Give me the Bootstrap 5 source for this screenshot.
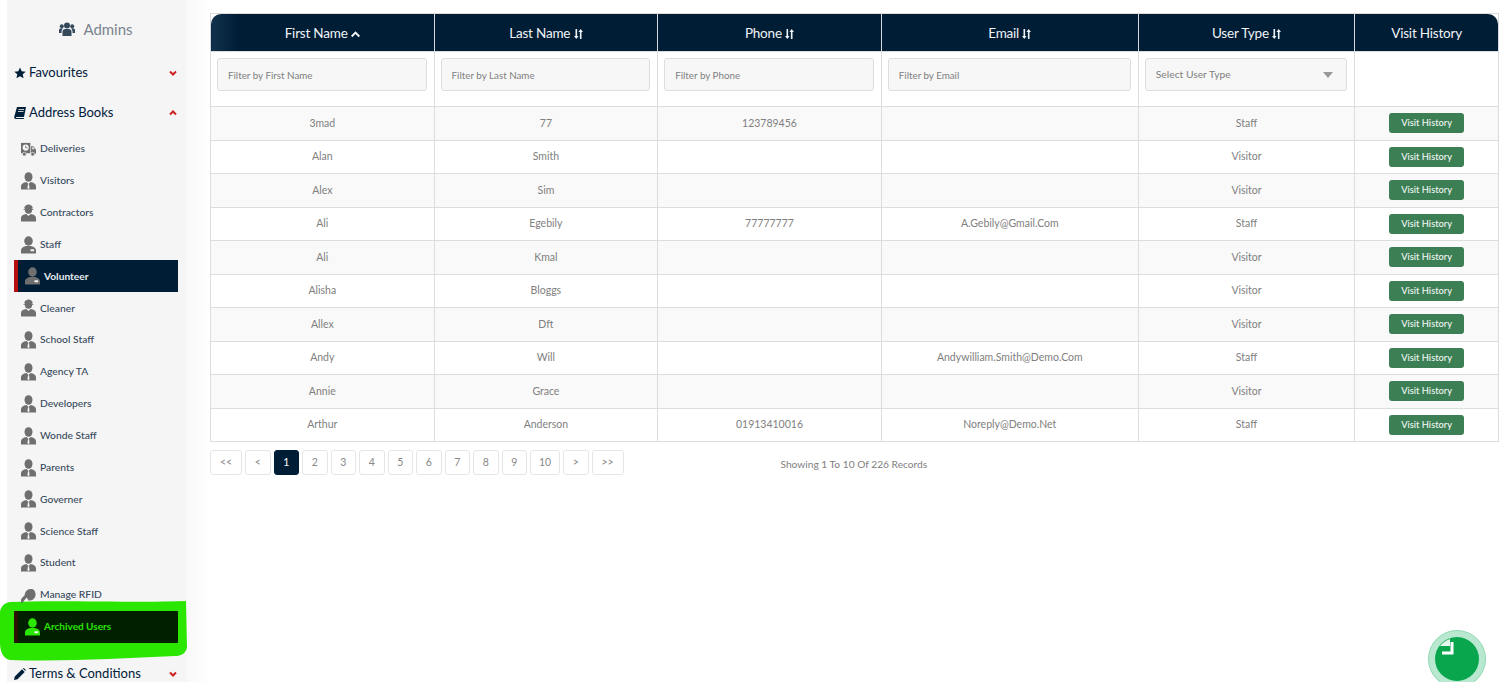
<!DOCTYPE html>
<html lang="en"><head><meta charset="utf-8"><title>Archived Users</title>
<link href="https://cdn.jsdelivr.net/npm/bootstrap@5.3.0/dist/css/bootstrap.min.css" rel="stylesheet">
<style>
html,body{height:682px;overflow:hidden;background:#fff}
body{font-family:"Lato","Liberation Sans",sans-serif;color:#808080}
.shell{height:682px;position:relative}
.side{width:179px;flex:none;margin-left:7px;background:#f5f5f5;height:682px;padding:18px 8px 0 7px;position:relative}
.adm{height:22px;font-size:15px;color:#7b8390;gap:8px;position:relative;z-index:1}
.grp{height:40px;font-size:13px;color:#00203a;padding-right:1px;gap:3px;position:relative;z-index:1}
.grp.first{margin-top:13px}
.grp.last{margin-top:11px}
.gi{width:12px;height:12px;fill:#00203a;flex:none}
.chev{width:8px;height:6px;stroke:#c22;stroke-width:2;fill:none;flex:none}
.sub{margin:0;padding:0;list-style:none;position:relative;z-index:1}
.sub li{height:31.87px;font-size:10.3px;color:#35495c;padding-left:7px;gap:4px;font-weight:500}
.ui{width:15px;height:18px;fill:#6f6f6f;flex:none}
.sub li.on{background:#001d36;color:#e8edf1;border-left:4px solid #b50f0f;font-weight:700;font-size:10.2px}
.sub li.arch{background:#002000;color:#2be600;border-left:4px solid #2a1400;font-weight:700;font-size:10px}
.arch .ui{fill:#2be600}
.blob{position:absolute;left:-7px;top:601px;width:187px;height:60px;fill:#2be600;z-index:0}
.main{flex:1;padding:13px 14px 0 24px;min-width:0;background:linear-gradient(90deg,#f8f8f8,#fff 24px)}
.tbl{table-layout:fixed;width:1288px;margin:0;font-size:10.5px;border-color:#ddd;--bs-table-striped-bg:#f9f9f9;--bs-table-striped-color:#808080;--bs-table-color:#808080;--bs-table-bg:#fff}
.tbl th,.tbl td{text-align:center;vertical-align:middle;padding:1px 4px 0;border-color:#ddd}
.tbl td:last-child{padding-top:0}
.tbl thead tr.hd th{height:38px;background:#001d36;color:#f0f3f5;font-size:13.5px;letter-spacing:-.2px;font-weight:400;border-color:#d5d9dd;border-top:0}
.tbl thead tr.hd th:first-child{border-top-left-radius:10px;background:linear-gradient(90deg,#12324d,#001d36 12%)}
.tbl thead tr.hd th:last-child{border-top-right-radius:10px}
.tbl tr.flt td{height:55px;padding:6px 7px 15px 6px;background:#fff}
.tbl tbody tr{height:33.5px}
.c1{width:223.6px}.c2{width:257px}.c3{width:216.500px}.c4{width:143.700px}
.fin{height:33px;min-height:33px;background-color:#f7f7f7;border-color:#ddd;border-radius:3px;font-size:9.8px;padding:0 10px;color:#808080}
.fin::placeholder{color:#808080;opacity:1}
.fin.form-select{background-image:none;color:#808080;font-size:10.3px}
.selw{position:relative}
.tri{position:absolute;right:14px;top:14px;width:0;height:0;border:5.5px solid transparent;border-top:6px solid #999;border-bottom:0}
.vbtn{background:#3c7f55;color:#f2f6f3;font-size:9.3px;width:75px;height:20px;padding:0;border:0;border-radius:3px;line-height:20px;font-weight:500}
.so{width:9px;height:10px;fill:#f0f3f5;vertical-align:-1px}
.pgr{margin:8px 0 0;gap:3px}
.pgr .page-link{height:25px;min-width:25.5px;padding:0 7px;line-height:23px;text-align:center;font-size:10.5px;color:#888;background:#fff;border:1px solid #e6e6e6;border-radius:3px!important;margin:0!important}
.pgr .wa .page-link{min-width:32px}
.pgr .wb .page-link{min-width:30px}
.pgr .active .page-link{background:#001d36;border-color:#001d36;color:#fff}
.rec{font-size:10.2px;color:#808080;margin:15px 0 0 157px}
.clock{position:absolute;left:1428px;top:630px;width:58px;height:58px}
</style></head>
<body>
<svg width="0" height="0" class="d-none" aria-hidden="true">
<symbol id="tie" viewBox="0 0 15 18"><ellipse cx="7.500" cy="5" rx="4" ry="4.800"/><path d="M0 17.500v-3c0-2.700 2.500-4 5.300-4.500l2.200 2 2.200-2c2.800.5 5.300 1.800 5.300 4.500v3z"/><path d="M7 12.200h1l.6 3.800-1.100 1.300-1.100-1.300z" fill="#f5f5f5"/></symbol>
<symbol id="hat" viewBox="0 0 15 18"><ellipse cx="7.500" cy="6" rx="3.600" ry="3.800"/><path d="M3.200 4.500C3.500 1.500 5.500.5 7.500.5s4 1 4.300 4zM2.500 5h10v.8h-10z"/><path d="M0 17.500v-3.500c0-2.500 2.500-3.600 5.300-4l2.200 2 2.200-2c2.800.4 5.300 1.500 5.300 4v3.500z"/></symbol>
<symbol id="bdg" viewBox="0 0 15 18"><ellipse cx="7.500" cy="5" rx="4.300" ry="4.700"/><path d="M0 17.500v-3c0-2.700 2.500-4 5.300-4.500h4.400c2.800.5 5.300 1.800 5.300 4.500v3z"/><rect x="9.300" y="13.300" width="4" height="2" rx="1" fill="#f5f5f5"/></symbol>
</svg>
<div class="shell d-flex">
<aside class="side">
<div class="adm d-flex align-items-center justify-content-center"><svg width="16" height="14" viewBox="0 0 16 14" fill="#35495c"><circle cx="8" cy="3.500" r="3"/><circle cx="2.800" cy="4.200" r="2"/><circle cx="13.200" cy="4.200" r="2"/><path d="M3.500 14V9.500C3.500 8 5 7 6 7h4c1 0 2.500 1 2.500 2.500V14z"/><path d="M0 11V8c0-1 1-1.800 2-1.800h1.800L2.500 9v2zM16 11V8c0-1-1-1.800-2-1.800h-1.800L13.500 9v2z"/></svg><span>Admins</span></div>
<div class="grp first d-flex align-items-center"><svg class="gi" viewBox="0 0 24 24"><path d="M12 1l3.400 7.400 8 .9-6 5.400 1.700 8L12 18.700 4.900 22.700l1.700-8-6-5.400 8-.9z"/></svg><span class="flex-grow-1">Favourites</span><svg class="chev" viewBox="0 0 8 6"><path d="M1 1.500l3 3 3-3"/></svg></div>
<div class="grp d-flex align-items-center"><svg class="gi" viewBox="0 0 12 12"><path d="M3 0h9l-2 10H2.500c-.8 0-.8 1 0 1H10l-.2 1H2C.5 12 0 10.800.3 9.500z"/><path d="M4.500 2.500h5.500M4 4.500h5.500" stroke="#f5f5f5" stroke-width=".8"/></svg><span class="flex-grow-1">Address Books</span><svg class="chev" viewBox="0 0 8 6"><path d="M1 4.500l3-3 3 3"/></svg></div>
<ul class="sub">
<li class="d-flex align-items-center"><svg class="ui" viewBox="0 0 16 18"><path d="M0 2.500h10v11H0z"/><path d="M10.700 6h2.300l3 3.500V14h-5.300z"/><circle cx="3.500" cy="14.500" r="2" stroke="#f5f5f5" stroke-width=".7"/><circle cx="12.500" cy="14.500" r="2" stroke="#f5f5f5" stroke-width=".7"/><circle cx="5" cy="7.500" r="3.300" fill="#f5f5f5"/><path d="M5 5.500v2.200h1.800" fill="none" stroke="#6f6f6f" stroke-width=".9"/><path d="M12 7.200h1l1.600 2h-2.600z" fill="#f5f5f5"/></svg>Deliveries</li>
<li class="d-flex align-items-center"><svg class="ui"><use href="#tie"/></svg>Visitors</li>
<li class="d-flex align-items-center"><svg class="ui"><use href="#hat"/></svg>Contractors</li>
<li class="d-flex align-items-center"><svg class="ui"><use href="#bdg"/></svg>Staff</li>
<li class="on d-flex align-items-center"><svg class="ui"><use href="#bdg"/></svg>Volunteer</li>
<li class="d-flex align-items-center"><svg class="ui"><use href="#hat"/></svg>Cleaner</li>
<li class="d-flex align-items-center"><svg class="ui"><use href="#tie"/></svg>School Staff</li>
<li class="d-flex align-items-center"><svg class="ui"><use href="#tie"/></svg>Agency TA</li>
<li class="d-flex align-items-center"><svg class="ui"><use href="#tie"/></svg>Developers</li>
<li class="d-flex align-items-center"><svg class="ui"><use href="#tie"/></svg>Wonde Staff</li>
<li class="d-flex align-items-center"><svg class="ui"><use href="#tie"/></svg>Parents</li>
<li class="d-flex align-items-center"><svg class="ui"><use href="#tie"/></svg>Governer</li>
<li class="d-flex align-items-center"><svg class="ui"><use href="#tie"/></svg>Science Staff</li>
<li class="d-flex align-items-center"><svg class="ui"><use href="#tie"/></svg>Student</li>
<li class="d-flex align-items-center"><svg class="ui" viewBox="0 0 16 18" fill="none" stroke="#6f6f6f"><path d="M1 15.500c1-2 2.500-3.500 4-5" stroke-width="3.400" stroke-linecap="round"/><path d="M4.500 9a6 6 0 0 1 8-5.500 6 6 0 0 1 1.500 8c-1 2-4 3-6.500 2.500" stroke-width="1.300"/><path d="M7 9.500a3.500 3.500 0 1 1 3.500 2.500" stroke-width="1.300"/><circle cx="10" cy="8.500" r="1" fill="#6f6f6f" stroke="none"/></svg>Manage RFID</li>
<li class="arch d-flex align-items-center"><svg class="ui"><use href="#bdg"/></svg>Archived Users</li>
</ul>
<div class="grp last d-flex align-items-center"><svg class="gi" viewBox="0 0 12 12"><path d="M0 12l.8-3.500L8 1.300 10.700 4 3.500 11.200zM8.800.5l1-.5 2 2-.5 1z"/></svg><span class="flex-grow-1">Terms &amp; Conditions</span><svg class="chev" viewBox="0 0 8 6"><path d="M1 1.500l3 3 3-3"/></svg></div>
<svg class="blob" viewBox="0 0 187 60" preserveAspectRatio="none"><path d="M10 1C60-1 140 2 186 0l1 47c-2 6-6 8-12 8-55 2-110 6-165 4C3 58 0 50 0 42V12C0 6 4 2 10 1z"/></svg>
</aside>
<main class="main">
<table class="table table-bordered table-striped tbl">
<colgroup><col class="c1"><col class="c1"><col class="c1"><col class="c2"><col class="c3"><col class="c4"></colgroup>
<thead>
<tr class="hd"><th>First Name <svg class="so" viewBox="0 0 10 10"><path d="M5 2l5 5-1.500 1.500L5 5 1.500 8.500 0 7z"/></svg></th>
<th>Last Name <svg class="so" viewBox="0 0 9 10"><path d="M1.500 0h1.600v7H4.600L2.300 10 0 7h1.500zM5.900 10h1.600V3H9L6.700 0 4.400 3h1.500z"/></svg></th>
<th>Phone <svg class="so" viewBox="0 0 9 10"><path d="M1.500 0h1.600v7H4.600L2.300 10 0 7h1.500zM5.900 10h1.600V3H9L6.700 0 4.400 3h1.500z"/></svg></th>
<th>Email <svg class="so" viewBox="0 0 9 10"><path d="M1.500 0h1.600v7H4.600L2.300 10 0 7h1.500zM5.900 10h1.600V3H9L6.700 0 4.400 3h1.500z"/></svg></th>
<th>User Type <svg class="so" viewBox="0 0 9 10"><path d="M1.500 0h1.600v7H4.600L2.300 10 0 7h1.500zM5.900 10h1.600V3H9L6.700 0 4.400 3h1.500z"/></svg></th>
<th>Visit History</th></tr>
<tr class="flt">
<td><input class="form-control fin" placeholder="Filter by First Name"></td>
<td><input class="form-control fin" placeholder="Filter by Last Name"></td>
<td><input class="form-control fin" placeholder="Filter by Phone"></td>
<td><input class="form-control fin" placeholder="Filter by Email"></td>
<td><div class="selw"><select class="form-select fin"><option>Select User Type</option></select><span class="tri"></span></div></td>
<td></td></tr>
</thead>
<tbody>
<tr><td>3mad</td><td>77</td><td>123789456</td><td></td><td>Staff</td><td><button class="btn vbtn">Visit History</button></td></tr>
<tr><td>Alan</td><td>Smith</td><td></td><td></td><td>Visitor</td><td><button class="btn vbtn">Visit History</button></td></tr>
<tr><td>Alex</td><td>Sim</td><td></td><td></td><td>Visitor</td><td><button class="btn vbtn">Visit History</button></td></tr>
<tr><td>Ali</td><td>Egebily</td><td>77777777</td><td>A.Gebily@Gmail.Com</td><td>Staff</td><td><button class="btn vbtn">Visit History</button></td></tr>
<tr><td>Ali</td><td>Kmal</td><td></td><td></td><td>Visitor</td><td><button class="btn vbtn">Visit History</button></td></tr>
<tr><td>Alisha</td><td>Bloggs</td><td></td><td></td><td>Visitor</td><td><button class="btn vbtn">Visit History</button></td></tr>
<tr><td>Allex</td><td>Dft</td><td></td><td></td><td>Visitor</td><td><button class="btn vbtn">Visit History</button></td></tr>
<tr><td>Andy</td><td>Will</td><td></td><td>Andywilliam.Smith@Demo.Com</td><td>Staff</td><td><button class="btn vbtn">Visit History</button></td></tr>
<tr><td>Annie</td><td>Grace</td><td></td><td></td><td>Visitor</td><td><button class="btn vbtn">Visit History</button></td></tr>
<tr><td>Arthur</td><td>Anderson</td><td>01913410016</td><td>Noreply@Demo.Net</td><td>Staff</td><td><button class="btn vbtn">Visit History</button></td></tr>
</tbody>
</table>
<div class="d-flex align-items-start">
<ul class="pagination pgr">
<li class="page-item wa"><a class="page-link" href="#">&lt;&lt;</a></li>
<li class="page-item"><a class="page-link" href="#">&lt;</a></li>
<li class="page-item active"><a class="page-link" href="#">1</a></li>
<li class="page-item"><a class="page-link" href="#">2</a></li>
<li class="page-item"><a class="page-link" href="#">3</a></li>
<li class="page-item"><a class="page-link" href="#">4</a></li>
<li class="page-item"><a class="page-link" href="#">5</a></li>
<li class="page-item"><a class="page-link" href="#">6</a></li>
<li class="page-item"><a class="page-link" href="#">7</a></li>
<li class="page-item"><a class="page-link" href="#">8</a></li>
<li class="page-item"><a class="page-link" href="#">9</a></li>
<li class="page-item wb"><a class="page-link" href="#">10</a></li>
<li class="page-item"><a class="page-link" href="#">&gt;</a></li>
<li class="page-item wa"><a class="page-link" href="#">&gt;&gt;</a></li>
</ul>
<div class="rec">Showing 1 To 10 Of 226 Records</div>
</div>
</main>
<svg class="clock" viewBox="0 0 58 58"><circle cx="29" cy="29" r="28.500" fill="#b8e8cf" stroke="#8fd9b2" stroke-width="1"/><circle cx="29" cy="29" r="22" fill="#0aa64e"/><path d="M12 16a22 22 0 0 1 10-7v7z" fill="#e6f8ee"/><path d="M24 12v11H14" fill="none" stroke="#fff" stroke-width="3"/></svg>
</div>
<script src="https://cdn.jsdelivr.net/npm/bootstrap@5.3.0/dist/js/bootstrap.bundle.min.js"></script>
</body></html>
